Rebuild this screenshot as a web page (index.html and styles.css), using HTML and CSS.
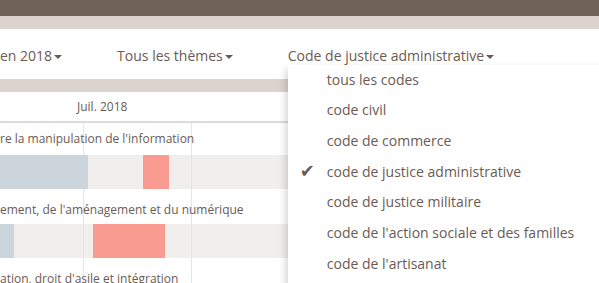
FILE: index.html
```html
<!DOCTYPE html>
<html lang="fr">
    <head>
        <meta charset="utf-8">
        <meta name="viewport" content="width=device-width, initial-scale=1">
        <title>Textes de loi en 2018</title>
        <link rel="stylesheet" href="styles.css">
    </head>
    <body>
        <div class="topbar"></div>
        <div class="band"></div>
        <nav class="filters">
            <span class="filter">en 2018<i class="caret"></i></span>
            <span class="filter">Tous les thèmes<i class="caret"></i></span>
            <span class="filter filter-open">Code de justice administrative<i class="caret"></i>
                <!-- menu déroulant ouvert sur le code choisi -->
                <ul class="dropdown">
                    <li>tous les codes</li>
                    <li>code civil</li>
                    <li>code de commerce</li>
                    <li class="selected"><span class="check">✔</span>code de justice administrative</li>
                    <li>code de justice militaire</li>
                    <li>code de l'action sociale et des familles</li>
                    <li>code de l'artisanat</li>
                </ul>
            </span>
        </nav>
        <div class="band"></div>
        <section class="timeline">
            <div class="months">
                <span class="month">Juil. 2018</span>
            </div>
            <div class="label label-first">re la manipulation de l'information</div>
            <div class="bars">
                <span class="bar bar-blue" style="left: 0; width: 88px"></span>
                <span class="bar bar-red" style="left: 143px; width: 26px"></span>
            </div>
            <div class="label">ement, de l'aménagement et du numérique</div>
            <div class="bars">
                <span class="bar bar-blue" style="left: 0; width: 14px"></span>
                <span class="bar bar-red" style="left: 93px; width: 72px"></span>
            </div>
            <div class="label">ation, droit d'asile et intégration</div>
        </section>
    </body>
</html>
```

FILE: styles.css
```css
body {
    margin: 0;
    font-family: "Open Sans", sans-serif;
    color: #6b5b53;
    background: #fff;
    overflow: hidden;
}
.topbar {
    height: 16px;
    background: #6f6259;
}
.band {
    height: 13px;
    background: #dcd3ce;
}
.filters {
    display: flex;
    align-items: center;
    gap: 55px;
    height: 50px;
    padding: 2px 0 0 0;
    box-sizing: border-box;
    font-size: 14px;
}
.filter {
    white-space: nowrap;
}
.filter-open {
    position: relative;
}
.caret {
    display: inline-block;
    margin-left: 2px;
    vertical-align: middle;
    border-top: 4px solid #6b5b53;
    border-left: 4px solid transparent;
    border-right: 4px solid transparent;
}
.dropdown {
    position: absolute;
    top: 19px;
    left: 0;
    width: 330px;
    margin: 0;
    padding: 0 0 12px;
    list-style: none;
    background: #fff;
    box-shadow: -2px 4px 8px rgba(0, 0, 0, 0.18);
    font-size: 14px;
    z-index: 2;
}
.dropdown li {
    position: relative;
    padding: 5px 0 5px 39px;
    line-height: 20.67px;
}
.check {
    position: absolute;
    left: 12px;
    top: 4px;
    font-family: "DejaVu Sans", sans-serif;
    font-size: 18px;
}
.timeline {
    font-size: 12px;
}
.months {
    height: 29px;
    border-bottom: 2px solid #dedad8;
    line-height: 29px;
}
.month {
    padding-left: 77px;
}
.label, .bars {
    background-image: repeating-linear-gradient(90deg, transparent 0 107px, #e8e5e3 107px 108px);
    background-position: -24px 0;
}
.label {
    height: 35px;
    padding-top: 11px;
    box-sizing: border-box;
    line-height: 20px;
    white-space: nowrap;
}
.label-first {
    height: 32px;
    padding-top: 6px;
}
.bars {
    position: relative;
    height: 34px;
    background-color: #f0efed;
}
.bar {
    position: absolute;
    top: 0;
    bottom: 0;
}
.bar-blue {
    background: #cdd5dc;
}
.bar-red {
    background: #f99b90;
}
```
